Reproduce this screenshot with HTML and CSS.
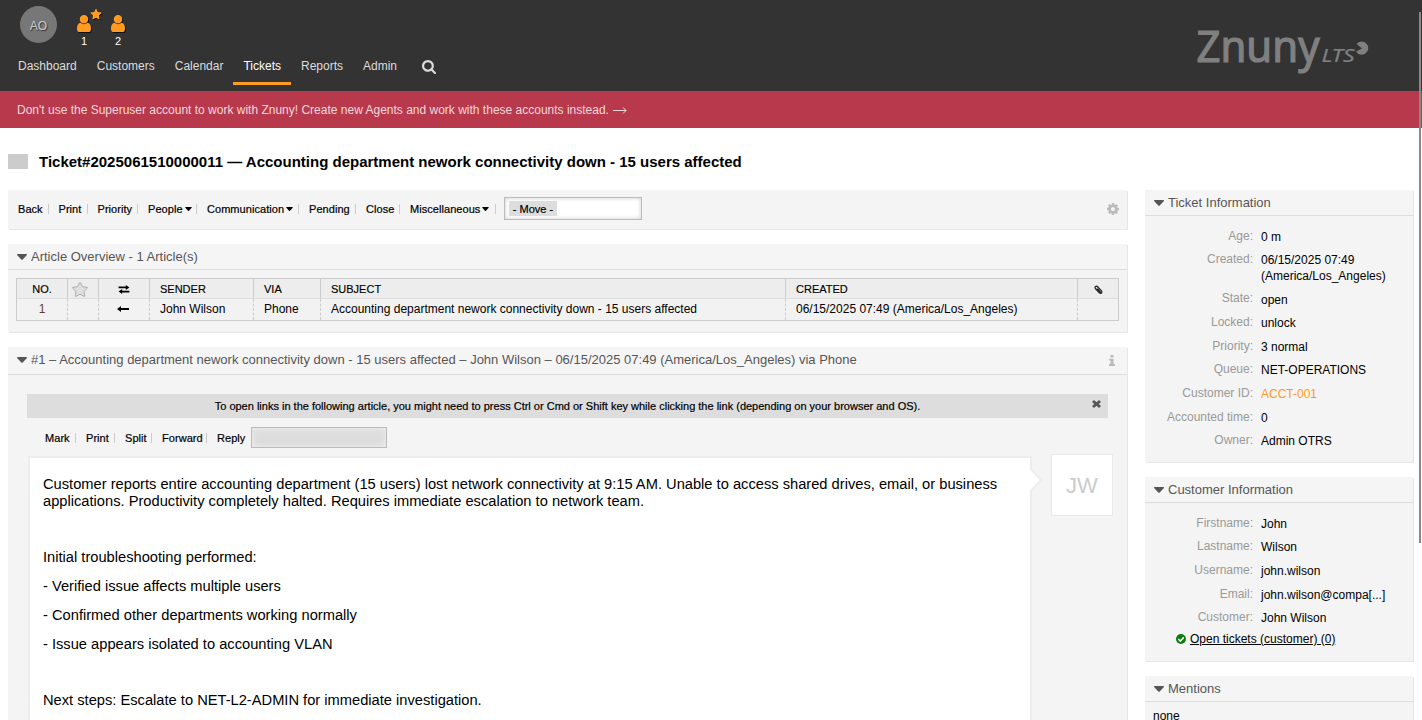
FILE: index.html
```html
<!DOCTYPE html>
<html lang="en">
<head>
<meta charset="utf-8">
<title>Ticket#2025061510000011 - Znuny</title>
<link rel="stylesheet" href="styles.css">
</head>
<body>
<svg class="defs" aria-hidden="true">
  <symbol id="user" viewBox="256 128 1280 1536" preserveAspectRatio="none"><path d="M1536 1399q0 109-62.500 187t-150.500 78h-854q-88 0-150.500-78t-62.500-187q0-85 8.500-160.500t31.500-152 58.500-131 94-89 134.500-34.500q131 128 313 128t313-128q76 0 134.500 34.500t94 89 58.500 131 31.500 152 8.500 160.500zm-256-887q0 159-112.500 271.500t-271.500 112.500-271.500-112.500-112.500-271.500 112.500-271.500 271.500-112.500 271.500 112.500 112.500 271.500z"/></symbol>
  <symbol id="star" viewBox="0 0 1792 1792"><path d="M1728 647q0 22-26 48l-363 354 86 500q1 7 1 20 0 21-10.500 35.500t-30.500 14.500q-19 0-40-12l-449-236-449 236q-22 12-40 12-21 0-31.500-14.500t-10.500-35.500q0-6 2-20l86-500-364-354q-25-27-25-48 0-37 56-46l502-73 225-455q19-41 49-41t49 41l225 455 502 73q56 9 56 46z"/></symbol>
  <symbol id="search" viewBox="64 128 1664 1664"><path d="M1216 832q0-185-131.500-316.500t-316.500-131.500-316.500 131.500-131.500 316.500 131.500 316.500 316.500 131.500 316.500-131.500 131.500-316.500zm512 832q0 52-38 90t-90 38q-54 0-90-38l-343-342q-179 124-399 124-143 0-273.500-55.500t-225-150-150-225-55.500-273.500 55.500-273.500 150-225 225-150 273.500-55.500 273.500 55.500 225 150 150 225 55.500 273.500q0 220-124 399l343 343q37 37 37 90z"/></symbol>
  <symbol id="cog" viewBox="128 128 1536 1536"><path d="M1152 896q0-106-75-181t-181-75-181 75-75 181 75 181 181 75 181-75 75-181zm512-109v222q0 12-8 23t-20 13l-185 28q-19 54-39 91 35 50 107 138 10 12 10 25t-9 23q-27 37-99 108t-94 71q-12 0-26-9l-138-108q-44 23-91 38-16 136-29 186-7 28-36 28h-222q-14 0-24.500-8.500t-11.500-21.500l-28-184q-49-16-90-37l-141 107q-10 9-25 9-14 0-25-11-126-114-165-168-7-10-7-23 0-12 8-23 15-21 51-66.500t54-70.500q-27-50-41-99l-183-27q-13-2-21-12.500t-8-23.500v-222q0-12 8-23t19-13l186-28q14-46 39-92-40-57-107-138-10-12-10-24 0-10 9-23 26-36 98.500-107.500t94.500-71.500q13 0 26 10l138 107q44-23 91-38 16-136 29-186 7-28 36-28h222q14 0 24.500 8.500t11.500 21.500l28 184q49 16 90 37l142-107q9-9 24-9 13 0 25 10 129 119 165 170 7 8 7 22 0 12-8 23-15 21-51 66.500t-54 70.500q26 50 41 98l183 28q13 2 21 12.500t8 23.500z"/></symbol>
  <symbol id="caret" viewBox="0 0 10 6"><path d="M.7 0h8.600q.7 0 .7.700 0 .3-.3.600L5.700 5.600q-.7.500-1.400 0L.3 1.300Q0 1 0 .7 0 0 .7 0z"/></symbol>
</svg>

<header class="header">
  <div class="header-tools">
    <div class="avatar">AO</div>
    <div class="counter"><svg class="user-icon"><use href="#user"/></svg><svg class="badge-star"><use href="#star"/></svg><span>1</span></div>
    <div class="counter"><svg class="user-icon"><use href="#user"/></svg><span>2</span></div>
  </div>
  <nav class="nav">
    <a>Dashboard</a><a>Customers</a><a>Calendar</a><a class="selected">Tickets</a><a>Reports</a><a>Admin</a>
    <svg class="search-icon"><use href="#search"/></svg>
  </nav>
  <svg class="logo" viewBox="0 0 180 60">
    <text class="logo-name" x="1.500" y="41" textLength="123" lengthAdjust="spacingAndGlyphs">Znuny</text>
    <text class="logo-lts" x="126.500" y="41" textLength="33" lengthAdjust="spacingAndGlyphs">LTS</text>
    <path d="M167 28.500L161.500 24A6.600 6.600 0 1 1 161 31.500z"/>
  </svg>
</header>
<div class="banner">Don't use the Superuser account to work with Znuny! Create new Agents and work with these accounts instead. <svg class="arrow" viewBox="0 0 14 8"><path d="M0 4.500h13M10 1.500l3 3-3 3"/></svg></div>

<div class="headline"><span class="flag"></span><h1>Ticket#2025061510000011 — Accounting department nework connectivity down - 15 users affected</h1></div>

<div class="columns">
  <main class="content">
    <section class="box toolbar">
      <div class="actions ticket-actions">
        <a>Back</a><a>Print</a><a>Priority</a><a>People<svg><use href="#caret"/></svg></a><a>Communication<svg><use href="#caret"/></svg></a><a>Pending</a><a>Close</a><a>Miscellaneous<svg><use href="#caret"/></svg></a>
      </div>
      <div class="field move"><span>- Move -</span></div>
      <svg class="cog-icon"><use href="#cog"/></svg>
    </section>

    <section class="box overview">
      <h2><svg><use href="#caret"/></svg>Article Overview - 1 Article(s)</h2>
      <table>
        <colgroup><col class="c-no"><col class="c-star"><col class="c-dir"><col class="c-sender"><col class="c-via"><col class="c-subject"><col class="c-created"><col class="c-file"></colgroup>
        <thead><tr>
          <th class="mid">NO.</th>
          <th class="icon-cell"><svg class="t-star" viewBox="0 0 1792 1792"><use href="#star" width="1792" height="1792"/></svg></th>
          <th class="icon-cell"><svg class="t-swap" viewBox="0 0 12 10"><path d="M0 6.400h4V4.500L0 7.300 4 10V8.200h8V6.400zM12 1.800H8V0l4 2.700L8 5.500V3.600H0V1.800z"/></svg></th>
          <th>SENDER</th><th>VIA</th><th>SUBJECT</th><th>CREATED</th>
          <th class="icon-cell"><svg class="t-clip" viewBox="0 0 10 10"><path d="M2.500 4.200L6 8.200c1.400 1.400 3.700-.4 2.300-2.200L4 1.400C2.500 0 .2 1.600 1.500 3.300l4.200 4.500c.9.700 1.700-.2 1-1L3.600 3.400"/></svg></th>
        </tr></thead>
        <tbody><tr>
          <td class="mid brown">1</td><td></td>
          <td class="icon-cell"><svg class="t-left" viewBox="0 0 12 6"><path d="M12 2H4V0L0 3l4 3V4h8z"/></svg></td>
          <td>John Wilson</td><td>Phone</td><td>Accounting department nework connectivity down - 15 users affected</td><td>06/15/2025 07:49 (America/Los_Angeles)</td><td></td>
        </tr></tbody>
      </table>
    </section>

    <section class="box article">
      <h2><svg><use href="#caret"/></svg>#1 – Accounting department nework connectivity down - 15 users affected – John Wilson – 06/15/2025 07:49 (America/Los_Angeles) via Phone
        <svg class="info-icon" viewBox="0 0 6 11"><path d="M1.500 0h3v2.400h-3zM.2 3.700h4.300v5.400H6V11H0V9.100h1.500V5.500H.2z"/></svg></h2>
      <div class="notice">To open links in the following article, you might need to press Ctrl or Cmd or Shift key while clicking the link (depending on your browser and OS).
        <svg class="close" viewBox="0 0 9 8"><path d="M0 2L2 0l2.500 2.200L7 0l2 2-2.300 2L9 6 7 8 4.500 5.800 2 8 0 6l2.300-2z"/></svg></div>
      <div class="article-tools">
        <div class="actions article-actions"><a>Mark</a><a>Print</a><a>Split</a><a>Forward</a><a>Reply</a></div>
        <div class="field reply"></div>
      </div>
      <div class="message">
        <div class="bubble">
          <p class="lead">Customer reports entire accounting department (15 users) lost network connectivity at 9:15 AM. Unable to access shared drives, email, or business<br>applications. Productivity completely halted. Requires immediate escalation to network team.</p>
          <p>Initial troubleshooting performed:</p>
          <p>- Verified issue affects multiple users</p>
          <p>- Confirmed other departments working normally</p>
          <p>- Issue appears isolated to accounting VLAN</p>
          <p>Next steps: Escalate to NET-L2-ADMIN for immediate investigation.</p>
          <svg class="pointer" viewBox="0 0 13 24"><path class="fill" d="M0 1l10 11L0 23z"/><path class="edge" d="M1 1.500L11.500 12 1 22.500"/></svg>
        </div>
        <div class="initials">JW</div>
      </div>
    </section>
  </main>

  <aside class="sidebar">
    <section class="box">
      <h2><svg><use href="#caret"/></svg>Ticket Information</h2>
      <dl>
        <dt>Age:</dt><dd>0 m</dd>
        <dt>Created:</dt><dd>06/15/2025 07:49<br>(America/Los_Angeles)</dd>
        <dt>State:</dt><dd>open</dd>
        <dt>Locked:</dt><dd>unlock</dd>
        <dt>Priority:</dt><dd>3 normal</dd>
        <dt>Queue:</dt><dd>NET-OPERATIONS</dd>
        <dt>Customer ID:</dt><dd class="link">ACCT-001</dd>
        <dt>Accounted time:</dt><dd>0</dd>
        <dt>Owner:</dt><dd>Admin OTRS</dd>
      </dl>
    </section>
    <section class="box customer">
      <h2><svg><use href="#caret"/></svg>Customer Information</h2>
      <dl>
        <dt>Firstname:</dt><dd>John</dd>
        <dt>Lastname:</dt><dd>Wilson</dd>
        <dt>Username:</dt><dd>john.wilson</dd>
        <dt>Email:</dt><dd>john.wilson@compa[...]</dd>
        <dt>Customer:</dt><dd>John Wilson</dd>
      </dl>
      <div class="open-tickets"><svg viewBox="0 0 10 10"><circle cx="5" cy="5" r="5"/><path d="M2.300 5l2 2 3.500-3.600"/></svg><a>Open tickets (customer) (0)</a></div>
    </section>
    <section class="box mentions">
      <h2><svg><use href="#caret"/></svg>Mentions</h2>
      <p>none</p>
    </section>
  </aside>
</div>
<div class="scroll-thumb"></div>
</body>
</html>
```
FILE: styles.css
```css
* { box-sizing: border-box; }
html, body { height: 720px; overflow: hidden; }
body { margin: 0; background: #fff; color: #000; font: 12px/15px "Liberation Sans", Arial, sans-serif; }
h1, h2, p, dl, dd { margin: 0; font-weight: normal; }
svg { display: block; flex: none; overflow: visible; }
.defs { position: absolute; width: 0; height: 0; }

.header { position: relative; height: 91px; background: #333; color: #ddd; }
.header-tools { display: flex; padding: 6px 0 0 20px; height: 51px; }
.avatar { width: 37px; height: 37px; margin-right: 18px; border-radius: 50%; background: #777; color: #ccc; line-height: 40px; text-align: center; text-shadow: 1px 1px 1px #333; }
.counter { position: relative; width: 18px; margin-right: 16px; height: 42px; text-align: center; color: #fff; font-size: 11px; padding-top: 9px; }
.counter svg { fill: #ff9b21; filter: drop-shadow(1px 1px 0 #111); }
.user-icon { width: 14px; height: 17px; margin: 0 auto 2px; }
.badge-star { position: absolute; left: 15px; top: 2px; width: 12px; height: 13px; }
.nav { display: flex; padding-left: 8px; }
.nav a { height: 34px; padding: 8px 10px 0; white-space: nowrap; }
.nav a.selected { color: #fff; border-bottom: 3px solid #ff9b21; }
.search-icon { width: 14px; height: 14px; margin: 9px 0 0 15px; fill: #ddd; }
.logo { position: absolute; left: 1195px; top: 21px; width: 180px; height: 60px; fill: #808080; }
.logo path { transform: translateY(-1px); }
.logo-name { font: 400 43px "Noto Sans", "Open Sans", sans-serif; stroke: #808080; stroke-width: 1.200px; }
.logo-lts { font: italic 18px "Noto Sans", "Open Sans", sans-serif; stroke: #808080; stroke-width: .2px; }
.banner { display: flex; align-items: center; gap: 4px; height: 37px; padding: 1px 0 0 17px; background: #b8394c; color: #f6d8dc; }
.arrow { width: 14px; height: 8px; fill: none; stroke: #f6d8dc; }

.headline { display: flex; align-items: center; height: 62px; padding: 5px 0 0 8px; gap: 11px; }
.flag { width: 20px; height: 15px; margin-top: -1px; background: #ccc; }
.headline h1 { font-size: 15px; line-height: 18px; font-weight: bold; }

.columns { display: grid; grid-template-columns: 1119px 268px; column-gap: 18px; padding-left: 8px; }
.box { margin-bottom: 15px; background: #f4f4f4; box-shadow: 1px 1px 0 #e6e6e6; }
.box h2 { display: flex; align-items: center; height: 26px; padding-left: 9px; border-bottom: 1px solid #ddd; background: #f5f5f5; color: #555; font-size: 13px; }
.box h2 > svg:first-child { width: 10px; height: 6px; margin: 1px 4px 0 0; fill: #555; }

.toolbar { display: flex; height: 39px; padding: 7px 8px 0 10px; }
.actions, .field, .notice { -webkit-text-stroke: .2px #000; }
.actions { display: grid; font-size: 11px; line-height: 13px; letter-spacing: .05px; }
.ticket-actions { grid-template-columns: 40.500px 39px 50.500px 59px 102px 57px 44px 94px; height: 24px; padding-top: 6px; }
.actions a { display: flex; position: relative; white-space: nowrap; }
.actions a:not(:last-child)::after, .ticket-actions a:last-child::after { content: ""; position: absolute; right: 10px; top: 1px; width: 1px; height: 10px; background: #ccc; }
.ticket-actions a:last-child::after { right: 8px; }
.actions a svg { width: 7px; height: 4px; margin: 4px 0 0 2px; }
.field { border: 1px solid #bbb; background: #fff; box-shadow: inset 0 0 4px #ccc; font-size: 11px; }
.move { width: 138px; height: 23px; padding: 3px 4px; }
.move span { display: block; width: 48px; height: 15px; background: #ddd; text-align: center; line-height: 16px; }
.cog-icon { width: 12px; height: 12px; margin: 6px 0 0 auto; fill: #bbb; }

.overview { height: 88px; }
table { width: 1103px; margin: 8px 0 0 8px; border: 1px solid #ccc; border-collapse: separate; border-spacing: 0; table-layout: fixed; background: #f2f2f2; }
th, td { padding: 0 0 0 10px; text-align: left; font-weight: normal; white-space: nowrap; border-left: 1px solid #ccc; }
th { height: 20px; padding-top: 2px; background: #ededed; border-bottom: 1px solid #ddd; font-size: 11px; -webkit-text-stroke: .15px #000; }
td { height: 21px; padding-bottom: 1px; border-left-style: dashed; }
th:first-child, td:first-child { border-left: 0; }
th.mid, td.mid { padding-left: 0; text-align: center; }
.brown { color: #6b3a1f; }
.c-no { width: 50px; } .c-star { width: 31px; } .c-dir { width: 51px; } .c-sender { width: 104px; }
.c-via { width: 67px; } .c-subject { width: 465px; } .c-created { width: 292px; } .c-file { width: 41px; }
th.icon-cell, td.icon-cell { padding-left: 0; }
.icon-cell svg { margin: 0 auto; }
.icon-cell .t-star { width: 16px; height: 16px; margin-left: 4px; fill: #e0e0e0; stroke: #aaa; stroke-width: 110px; }
.t-swap { width: 12px; height: 9px; }
td .t-left { width: 12px; height: 6px; position: relative; left: -1px; }
.t-clip { width: 9px; height: 10px; fill: none; stroke: #222; stroke-width: 1.400px; }

.article { height: 420px; }
.article h2 { height: 28px; padding-bottom: 2px; }
.info-icon { width: 6px; height: 11px; margin: 1px 12px 0 auto; fill: #bbb; }
.notice { position: relative; height: 24px; margin: 19px 19px 0 19px; background: #ddd; font-size: 11px; line-height: 25px; text-align: center; }
.close { position: absolute; right: 7px; top: 6px; width: 9px; height: 8px; fill: #555; }
.article-tools { display: flex; padding: 9px 0 0 37px; }
.article-actions { grid-template-columns: 41px 39px 37px 55px 34px; padding-top: 5px; }
.reply { width: 136px; height: 21px; background: #ddd; box-shadow: inset 0 0 5px 1px #ededed; }
.message { display: flex; align-items: flex-start; margin: 6px 0 0 20px; }
.bubble { position: relative; width: 1004px; height: 300px; margin-top: 2px; padding: 18px 13px 0; background: #fff; border: 2px solid #ededed; font-size: 14.680px; line-height: 17px; white-space: nowrap; }
.bubble p { margin-bottom: 12px; }
.bubble .lead { margin-bottom: 39px; }
.bubble p:nth-last-of-type(2) { margin-bottom: 39px; }
.pointer { position: absolute; right: -13px; top: 10px; width: 13px; height: 24px; fill: none; }
.pointer .fill { fill: #fff; }
.pointer .edge { stroke: #ededed; stroke-width: 2; }
.initials { width: 62px; height: 62px; margin-left: 19px; background: #fff; border: 1px solid #eaeaea; color: #ccc; font-size: 22px; line-height: 61px; text-align: center; }

.sidebar dl { display: grid; grid-template-columns: 108px 1fr; column-gap: 8px; row-gap: 8.250px; padding: 12.600px 0 0; line-height: 15.400px; }
.sidebar .box:first-child { height: 272px; }
dt { color: #999; text-align: right; }
dd { padding-top: 1.200px; margin-bottom: -1.200px; }
.link { color: #ff9b21; }
.customer { height: 184px; }
.open-tickets { display: flex; align-items: center; gap: 4px; padding: 6px 0 0 31px; }
.open-tickets a { text-decoration: underline; }
.open-tickets svg { width: 10px; height: 10px; margin-top: -1px; fill: #0a7d0a; }
.open-tickets path { fill: none; stroke: #fff; stroke-width: 1.600; }
.mentions { height: 80px; }
.mentions p { padding: 7px 8px; }
.scroll-thumb { position: absolute; left: 1419px; top: 12px; width: 2px; height: 531px; background: #888; }
```
